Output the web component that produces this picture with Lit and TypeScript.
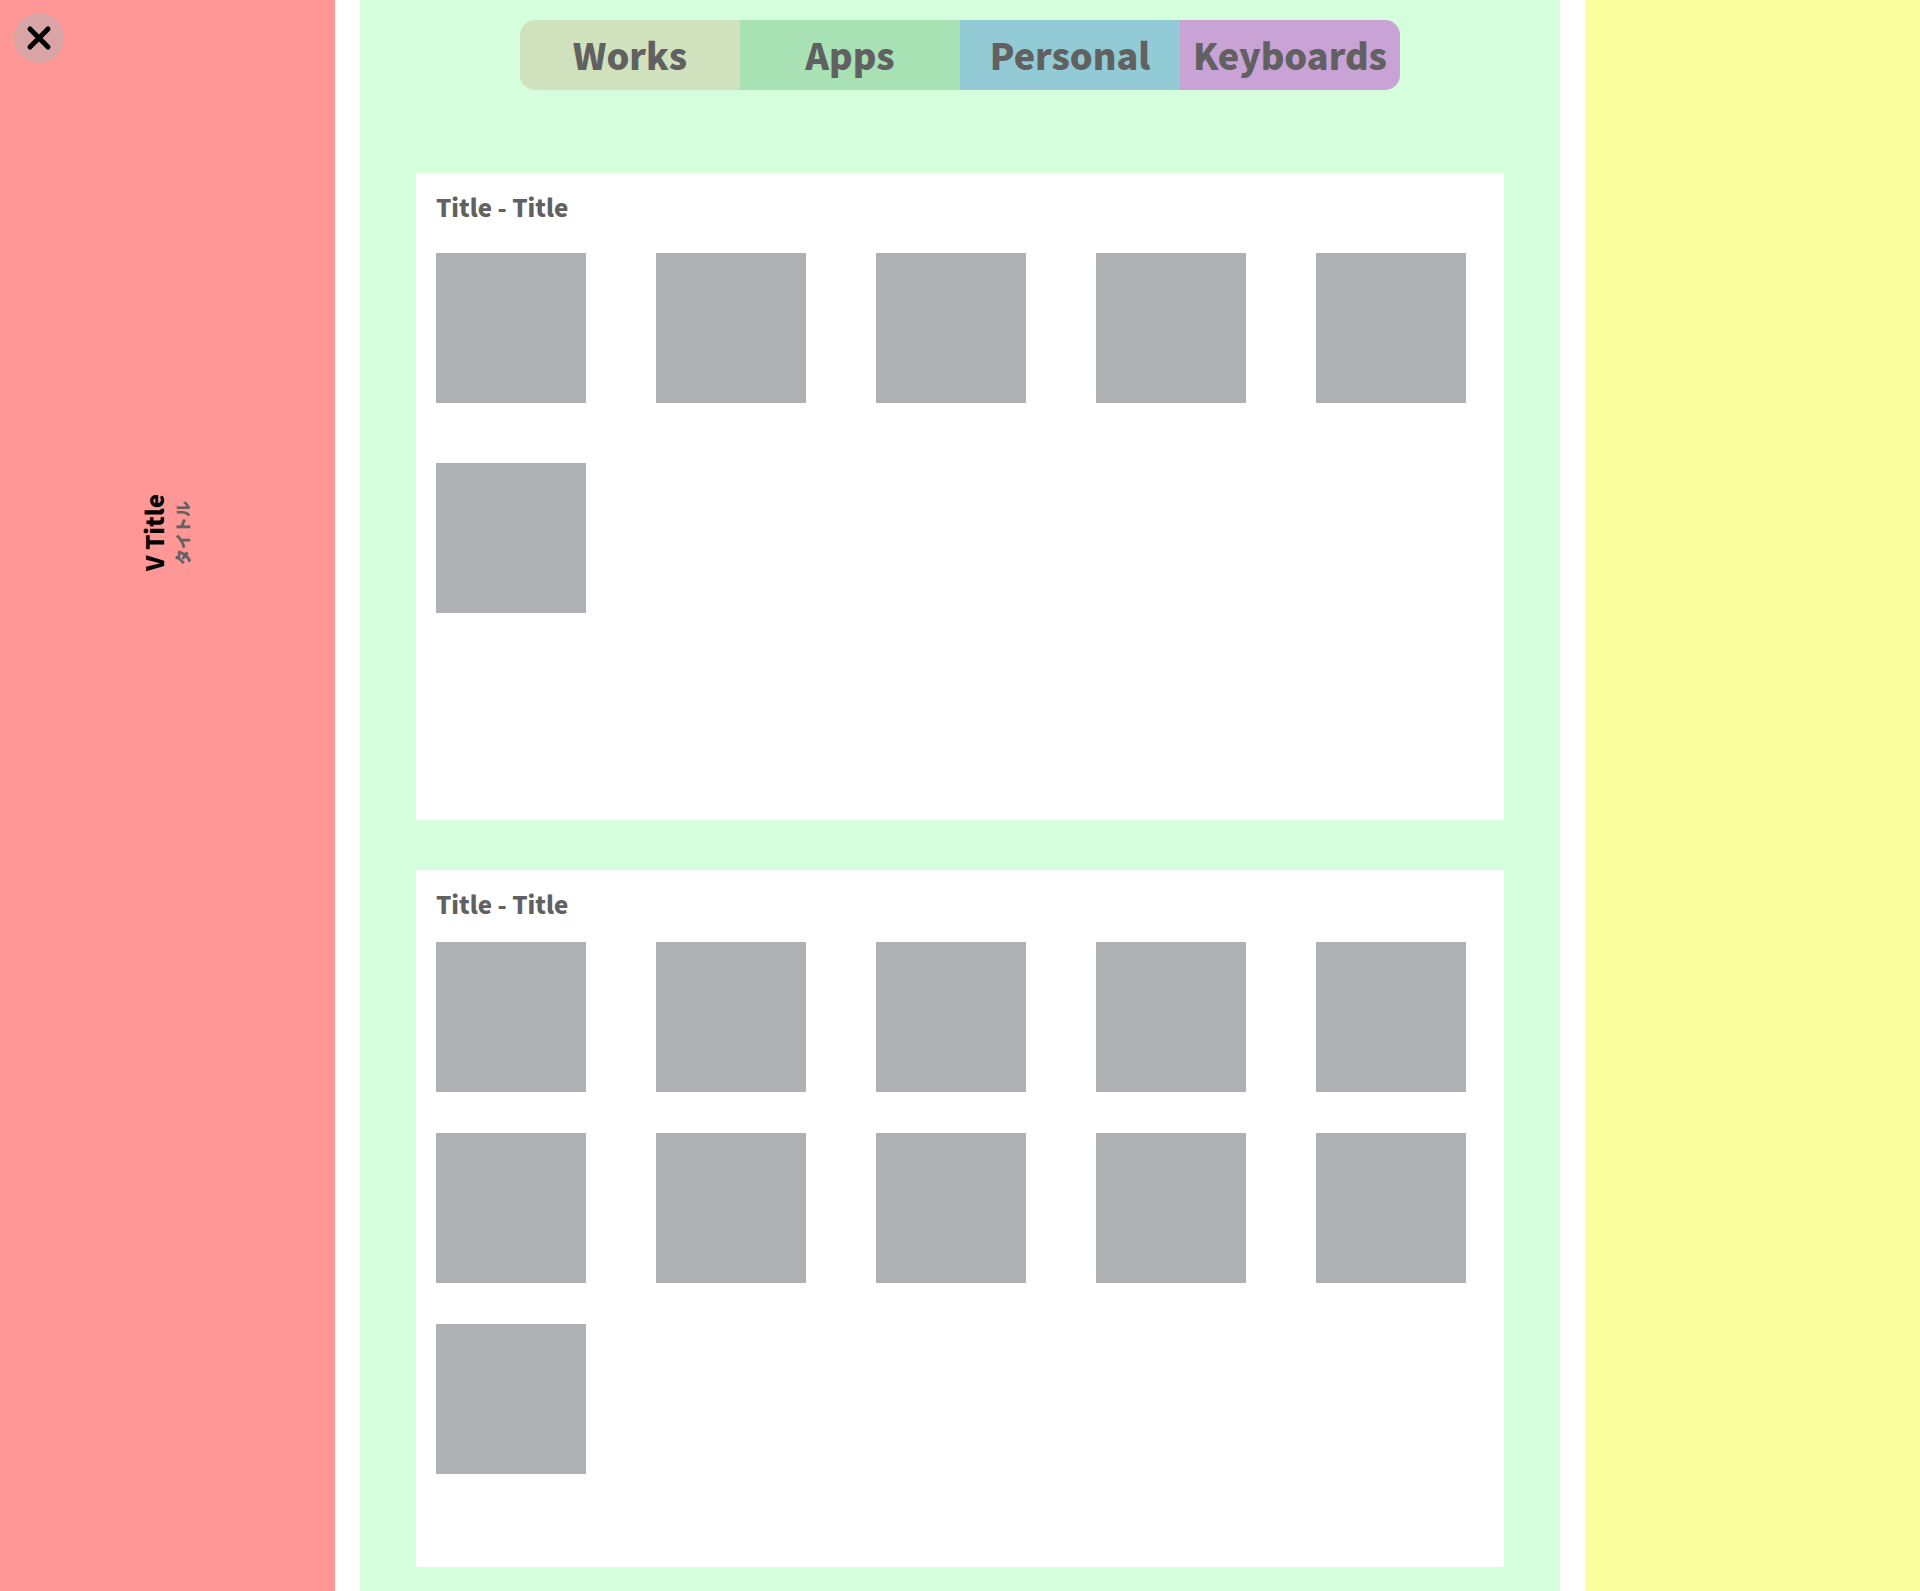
import { LitElement, html, css } from "lit";
import { customElement, property } from "lit/decorators.js";

const tabs = [
  { label: "Works", tone: "sand" },
  { label: "Apps", tone: "mint" },
  { label: "Personal", tone: "sky" },
  { label: "Keyboards", tone: "lilac" },
];

@customElement("tile-panel")
export class TilePanel extends LitElement {
  @property() heading = "";
  @property({ type: Number }) count = 0;
  @property({ type: Boolean, reflect: true }) dense = false;

  static styles = css`
    :host {
      display: block;
      background: #ffffff;
      padding: 16px 20px 207px;
    }
    :host([dense]) {
      padding-bottom: 93px;
    }
    .heading {
      margin: 0;
      font-size: 24px;
      line-height: 36px;
      font-weight: 900;
    }
    .tiles {
      list-style: none;
      margin: 28px 0 0;
      padding: 0;
      display: grid;
      grid-template-columns: repeat(auto-fill, 150px);
      gap: 60px 70px;
    }
    :host([dense]) .tiles {
      margin-top: 20px;
      row-gap: 41px;
    }
    .tile {
      height: 150px;
      background: #b0b1b5;
    }
  `;

  render() {
    return html`
      <h2 class="heading">${this.heading}</h2>
      <ul class="tiles">
        ${Array.from({ length: this.count }, () => html`<li class="tile"></li>`)}
      </ul>
    `;
  }
}

@customElement("app-root")
export class AppRoot extends LitElement {
  static styles = css`
    :host {
      display: block;
      font-family: "Noto Sans CJK JP", "Noto Sans", sans-serif;
      color: #616161;
      background: #ffffff;
    }
    .layout {
      display: grid;
      grid-template-columns: minmax(0, 335fr) minmax(0, 1200fr) minmax(0, 335fr);
      gap: 25px;
      min-height: 100vh;
    }
    .side {
      background: #ff9796;
      display: flex;
      flex-direction: column;
      padding: 13px 18px 13px 14px;
    }
    .close {
      width: 50px;
      height: 50px;
      padding: 0;
      border: 0;
      border-radius: 50%;
      background: #d8a4a5;
      color: #000000;
      display: grid;
      place-items: center;
      cursor: pointer;
    }
    .vertical {
      align-self: center;
      margin-top: 431px;
      writing-mode: vertical-rl;
      text-orientation: sideways;
      transform: rotate(180deg);
      display: flex;
      flex-direction: column;
      align-items: center;
    }
    .vtitle {
      margin: 0;
      font-size: 24px;
      line-height: 32px;
      font-weight: 900;
      color: #000000;
    }
    .vsub {
      margin: 0;
      font-size: 16px;
      line-height: 24px;
      font-weight: 900;
    }
    .main {
      background: #d5ffdc;
      padding: 20px 56px 24px;
    }
    .tabs {
      display: flex;
      max-width: 880px;
      margin: 0 auto 83px;
      border-radius: 15px;
      overflow: hidden;
    }
    .tab {
      flex: 1 1 0;
      min-width: 0;
      padding-bottom: 2px;
      text-align: center;
      font-size: 36px;
      line-height: 68px;
      font-weight: 900;
      color: inherit;
      text-decoration: none;
    }
    .sand { background: #d0e1be; }
    .mint { background: #a8e2b4; }
    .sky { background: #92cad5; }
    .lilac { background: #c9a2d6; }
    .panels {
      display: grid;
      gap: 50px;
    }
    .aside {
      background: #fbff9e;
    }
  `;

  render() {
    return html`
      <div class="layout">
        <header class="side">
          <button class="close" type="button" aria-label="Close">
            <svg width="26" height="26" viewBox="0 0 26 26" fill="none" stroke="currentColor" stroke-width="5" stroke-linecap="round">
              <path d="M4 4 22 22M22 4 4 22" />
            </svg>
          </button>
          <div class="vertical">
            <h1 class="vtitle">V Title</h1>
            <p class="vsub" lang="ja">タイトル</p>
          </div>
        </header>
        <main class="main">
          <nav class="tabs">
            ${tabs.map((t) => html`<a class="tab ${t.tone}" href="#${t.label.toLowerCase()}">${t.label}</a>`)}
          </nav>
          <div class="panels">
            <tile-panel heading="Title - Title" count="6"></tile-panel>
            <tile-panel heading="Title - Title" count="11" dense></tile-panel>
          </div>
        </main>
        <aside class="aside"></aside>
      </div>
    `;
  }
}
